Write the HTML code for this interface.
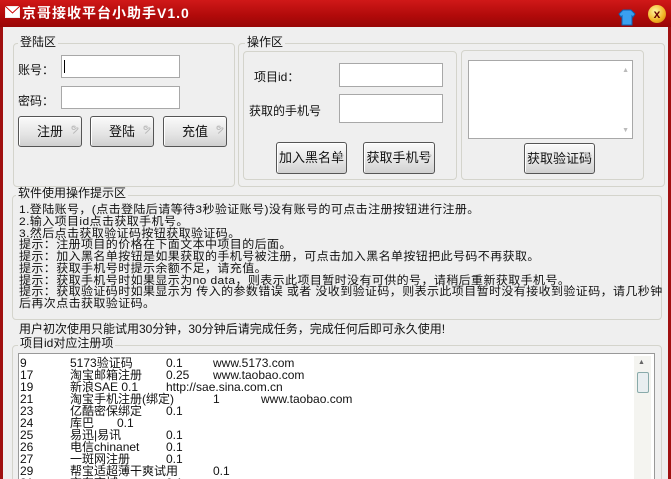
<!DOCTYPE html>
<html><head><meta charset="utf-8"><style>
*{margin:0;padding:0;box-sizing:border-box}
html,body{width:671px;height:479px;overflow:hidden}
body{background:#a01010;font-family:"Liberation Sans","Noto Sans CJK SC","WenQuanYi Zen Hei",sans-serif;font-size:12px;color:#111;position:relative}
.a{position:absolute}
#title{left:0;top:0;width:671px;height:27px;background:linear-gradient(#d01818,#b00a0a 60%,#980606);}
#body{left:3px;top:27px;width:665px;height:452px;background:#efefef;}
.box{position:absolute;border:1px solid #d4d4cc;border-radius:4px}
.lg{position:absolute;background:#efefef;padding:0 2px;font-size:12px;line-height:13px}
.in{position:absolute;background:#fff;border:1px solid #a8a8a8}
.btn{position:absolute;border:1px solid #555;border-radius:3px;background:linear-gradient(#fafafa,#e4e4e4 60%,#d0d0d0);text-align:center;font-size:13px;box-shadow:inset 1px 1px 0 #fff}
.btn:after{content:"ຯ";position:absolute;right:2px;top:-2px;color:#bbb;font-size:11px}
.t{position:absolute;left:19px;font-size:12px;line-height:12px;height:12px;white-space:nowrap;letter-spacing:0.4px;transform:scaleY(0.95);transform-origin:0 50%}
.row{position:absolute;left:20px;font-size:12px;line-height:12px;white-space:nowrap}
.row span{position:absolute}
</style></head><body>
<div id="title" class="a"></div>
<div class="a" style="left:5px;top:6px;width:15px;height:12px;background:#fff;border:1px solid #eee"></div>
<svg class="a" style="left:5px;top:6px" width="15" height="12"><path d="M0 0 L7.5 7 L15 0" stroke="#c00" fill="none"/></svg>
<div class="a" style="left:22px;top:5px;color:#fff;font-size:14px;font-weight:bold;line-height:16px;letter-spacing:1px">京哥接收平台小助手V1.0</div>
<svg class="a" style="left:618px;top:8px" width="18" height="18"><path d="M5 2 L13 2 L17 6 L15 9 L14 8 L14 17 L4 17 L4 8 L3 9 L1 6 Z" fill="#3aa0f0" stroke="#1060b0"/></svg>
<div class="a" style="left:648px;top:5px;width:18px;height:18px;border-radius:50%;background:radial-gradient(circle at 40% 35%,#fff7a0,#f0b020 60%,#c07010);text-align:center;font-weight:bold;font-size:12px;line-height:18px;color:#600">x</div>
<div id="body" class="a"></div>

<div class="box" style="left:13px;top:43px;width:222px;height:144px"></div>
<div class="lg" style="left:18px;top:36px">登陆区</div>
<div class="a" style="left:18px;top:61px">账号：</div>
<div class="in" style="left:61px;top:55px;width:119px;height:23px"><div style="position:absolute;left:2px;top:4px;width:1px;height:13px;background:#000"></div></div>
<div class="a" style="left:18px;top:92px">密码：</div>
<div class="in" style="left:61px;top:86px;width:119px;height:23px"></div>
<div class="btn" style="left:18px;top:116px;width:64px;height:31px;line-height:29px">注册</div>
<div class="btn" style="left:90px;top:116px;width:64px;height:31px;line-height:29px">登陆</div>
<div class="btn" style="left:163px;top:116px;width:64px;height:31px;line-height:29px">充值</div>

<div class="box" style="left:238px;top:43px;width:427px;height:144px"></div>
<div class="lg" style="left:245px;top:36px">操作区</div>
<div class="box" style="left:243px;top:51px;width:214px;height:129px"></div>
<div class="a" style="left:254px;top:68px">项目id：</div>
<div class="in" style="left:339px;top:63px;width:104px;height:24px"></div>
<div class="a" style="left:249px;top:102px">获取的手机号</div>
<div class="in" style="left:339px;top:94px;width:104px;height:29px"></div>
<div class="btn" style="left:276px;top:142px;width:71px;height:32px;line-height:30px">加入黑名单</div>
<div class="btn" style="left:363px;top:142px;width:72px;height:32px;line-height:30px">获取手机号</div>
<div class="box" style="left:461px;top:50px;width:183px;height:130px"></div>
<div class="in" style="left:468px;top:60px;width:165px;height:79px"><div style="position:absolute;right:3px;top:6px;color:#bbb;font-size:7px">▲</div><div style="position:absolute;right:3px;bottom:4px;color:#bbb;font-size:7px">▼</div></div>
<div class="btn" style="left:524px;top:143px;width:71px;height:31px;line-height:29px">获取验证码</div>

<div class="box" style="left:12px;top:195px;width:650px;height:125px"></div>
<div class="lg" style="left:16px;top:187px">软件使用操作提示区</div>
<div class="t" style="top:203px">1.登陆账号，(点击登陆后请等待3秒验证账号)没有账号的可点击注册按钮进行注册。</div>
<div class="t" style="top:214.75px">2.输入项目id点击获取手机号。</div>
<div class="t" style="top:226.5px">3.然后点击获取验证码按钮获取验证码。</div>
<div class="t" style="top:238.25px">提示：注册项目的价格在下面文本中项目的后面。</div>
<div class="t" style="top:250px">提示：加入黑名单按钮是如果获取的手机号被注册，可点击加入黑名单按钮把此号码不再获取。</div>
<div class="t" style="top:261.75px">提示：获取手机号时提示余额不足，请充值。</div>
<div class="t" style="top:273.5px">提示：获取手机号时如果显示为no data，则表示此项目暂时没有可供的号，请稍后重新获取手机号。</div>
<div class="t" style="top:285.25px">提示：获取验证码时如果显示为 传入的参数错误 或者 没收到验证码，则表示此项目暂时没有接收到验证码，请几秒钟</div>
<div class="t" style="top:297px">后再次点击获取验证码。</div>
<div class="a" style="left:19px;top:322px;font-size:12px;line-height:14px">用户初次使用只能试用30分钟，30分钟后请完成任务，完成任何后即可永久使用!</div>

<div class="box" style="left:12px;top:345px;width:650px;height:140px"></div>
<div class="lg" style="left:18px;top:337px">项目id对应注册项</div>
<div class="in" style="left:18px;top:353px;width:637px;height:130px;border-color:#999"></div>
<div class="a" style="left:634px;top:356px;width:17px;height:123px;background:#f4f4f0"></div>
<div class="a" style="left:637px;top:372px;width:12px;height:21px;border:1px solid #8aa;border-radius:2px;background:#e8eef0"></div>
<div class="a" style="left:638px;top:359px;font-size:7px;color:#666">▲</div>
<div class="row" style="top:357px"><span>9</span><span style="left:50px">5173验证码</span><span style="left:146px">0.1</span><span style="left:193px">www.5173.com</span></div>
<div class="row" style="top:369px"><span>17</span><span style="left:50px">淘宝邮箱注册</span><span style="left:146px">0.25</span><span style="left:193px">www.taobao.com</span></div>
<div class="row" style="top:381px"><span>19</span><span style="left:50px">新浪SAE 0.1</span><span style="left:146px">http://sae.sina.com.cn</span></div>
<div class="row" style="top:393px"><span>21</span><span style="left:50px">淘宝手机注册(绑定)</span><span style="left:193px">1</span><span style="left:241px">www.taobao.com</span></div>
<div class="row" style="top:405px"><span>23</span><span style="left:50px">亿酷密保绑定</span><span style="left:146px">0.1</span></div>
<div class="row" style="top:417px"><span>24</span><span style="left:50px">库巴</span><span style="left:97px">0.1</span></div>
<div class="row" style="top:429px"><span>25</span><span style="left:50px">易迅|易讯</span><span style="left:146px">0.1</span></div>
<div class="row" style="top:441px"><span>26</span><span style="left:50px">电信chinanet</span><span style="left:146px">0.1</span></div>
<div class="row" style="top:453px"><span>27</span><span style="left:50px">一斑网注册</span><span style="left:146px">0.1</span></div>
<div class="row" style="top:465px"><span>29</span><span style="left:50px">帮宝适超薄干爽试用</span><span style="left:193px">0.1</span></div>
<div class="row" style="top:477px"><span>31</span><span style="left:50px">京东商城</span><span style="left:146px">0.1</span></div>
</body></html>
